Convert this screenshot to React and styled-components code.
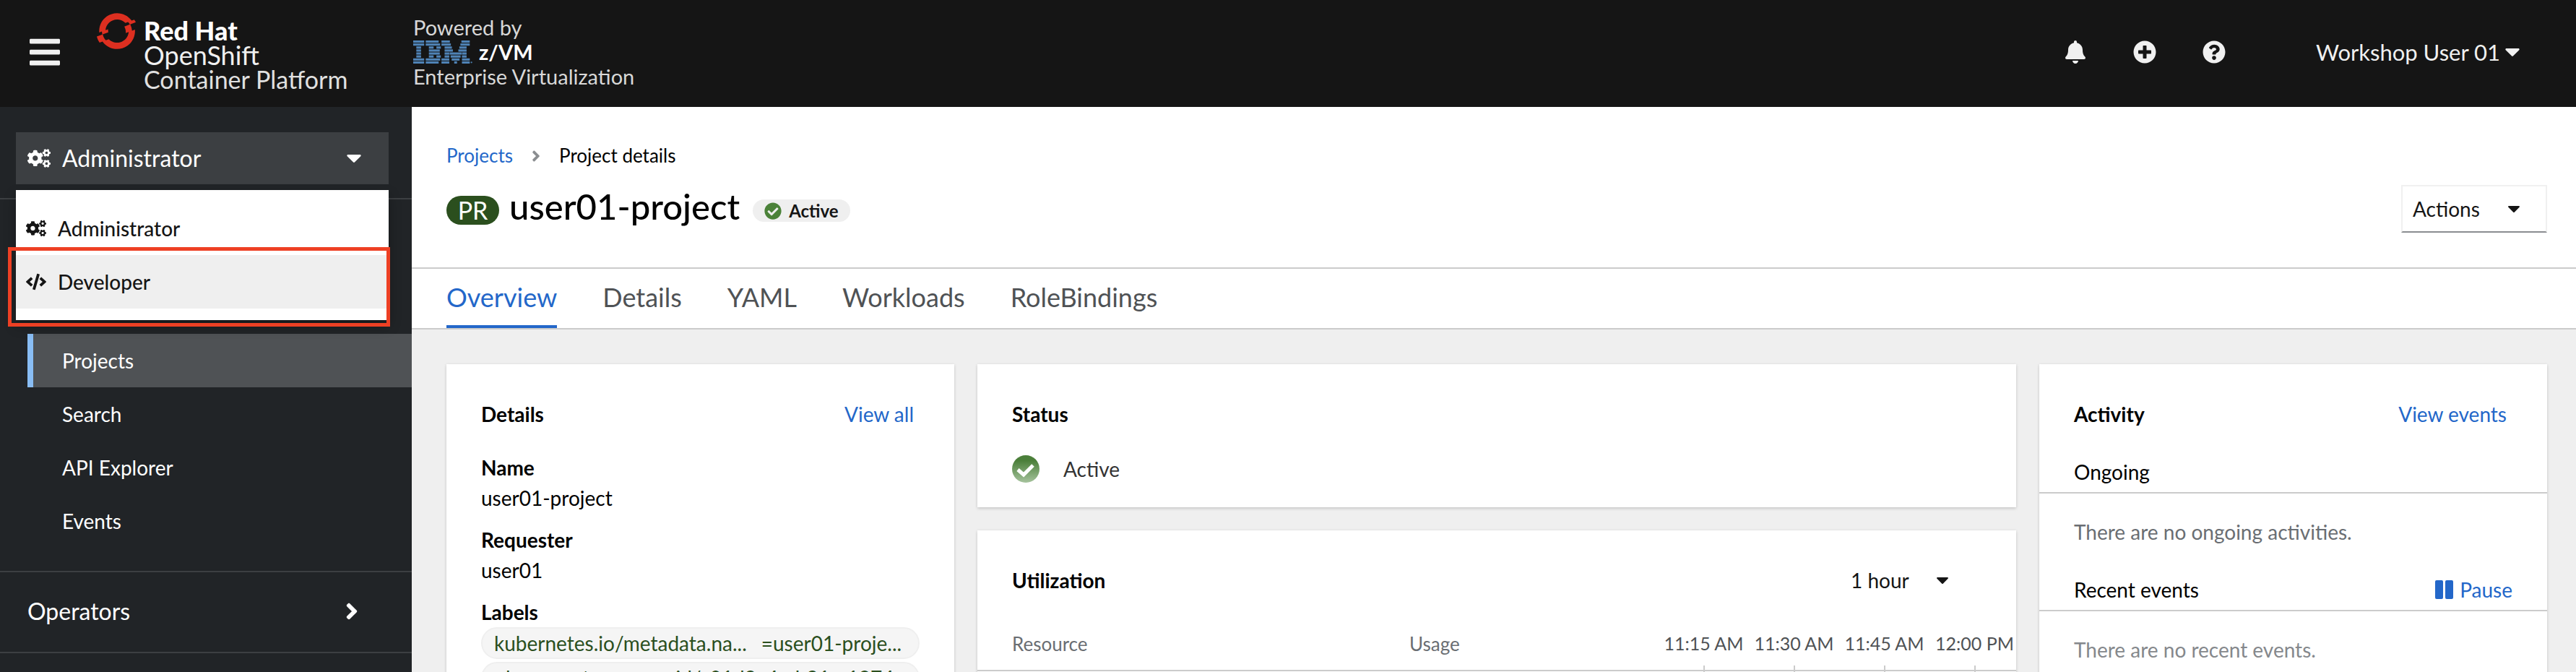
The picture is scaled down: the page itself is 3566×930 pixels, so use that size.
import React from 'react';
import styled, { createGlobalStyle, css } from 'styled-components';
import { FaBars, FaBell, FaPlusCircle, FaQuestionCircle, FaCogs, FaCode, FaAngleRight, FaCheckCircle } from 'react-icons/fa';
import { SiRedhatopenshift } from 'react-icons/si';

const color = {
  masthead: '#151515',
  sidebar: '#212427',
  sidebarLine: '#3c3f42',
  current: '#4f5255',
  accent: '#89bdf4',
  link: '#2367c9',
  line: '#cbcbcb',
  canvas: '#efefef',
  green: '#4b8239',
  darkGreen: '#2b4f1e',
  muted: '#6a6e73',
};

const GlobalStyle = createGlobalStyle`
  *, *::before, *::after { box-sizing: border-box; }
  body {
    margin: 0;
    font-family: Lato, "Liberation Sans", sans-serif;
    font-size: 28px;
    line-height: 42px;
    color: #000;
  }
  h1, h2, h3, p, ul, ol, dl, dd { margin: 0; padding: 0; }
  ul, ol { list-style: none; }
  button, select { font: inherit; color: inherit; border: 0; background: none; padding: 0; margin: 0; text-align: left; }
  svg { display: block; flex: none; }
`;

const Shell = styled.div`
  height: 100vh;
  display: grid;
  grid-template: auto minmax(0, 1fr) / 570px minmax(0, 1fr);
  overflow: hidden;
`;

/* Masthead */

const Masthead = styled.header`
  grid-column: 1 / -1;
  height: 148px;
  display: flex;
  align-items: center;
  padding: 0 78px 4px 38px;
  background: ${color.masthead};
  color: #f0f0f0;
`;

const Brand = styled.a`
  align-self: flex-start;
  display: flex;
  gap: 11px;
  margin-left: 48px;
  padding-top: 16px;
  color: #e0e0e0;
  text-decoration: none;
`;

const ProductName = styled.span`
  display: flex;
  flex-direction: column;
  width: 362px;
  padding-top: 9px;
  font-size: 34px;
  line-height: 34px;
`;

const ProductVendor = styled.strong`
  font-size: 36px;
  font-weight: 900;
  color: #fff;
`;

const ProductLine = styled.span`
  font-size: 36px;
  color: #f0f0f0;
`;

const PoweredBy = styled.span`
  display: flex;
  flex-direction: column;
  padding-top: 5px;
  font-size: 29px;
  line-height: 34px;
  color: #d8d8d8;
`;

const Hypervisor = styled.span`
  display: flex;
  align-items: center;
  gap: 8px;
  font-weight: 700;
  color: #fff;
`;

const Tools = styled.div`
  margin-left: auto;
  display: flex;
  align-items: center;
  gap: 64px;
`;

const UserMenu = styled.button`
  display: flex;
  align-items: center;
  gap: 7px;
  margin-left: 61px;
  font-size: 31px;
`;

/* Sidebar */

const Sidebar = styled.nav`
  background: ${color.sidebar};
  color: #fff;
`;

const Perspective = styled.div`
  position: relative;
  padding: 35px 32px 19px 22px;
  border-bottom: 2px solid ${color.sidebarLine};
`;

const PerspectiveToggle = styled.button`
  display: flex;
  align-items: center;
  width: 100%;
  height: 72px;
  padding: 0 38px 0 16px;
  gap: 16px;
  background: ${color.sidebarLine};
  font-size: 32px;

  svg:last-child { margin-left: auto; }
`;

const PerspectiveMenu = styled.ul`
  position: absolute;
  top: 115px;
  left: 22px;
  right: 32px;
  padding: 16px 0;
  background: #fff;
  color: ${color.masthead};
  box-shadow: 0 8px 16px rgba(3, 3, 3, 0.3);
`;

const PerspectiveOption = styled.button`
  display: flex;
  align-items: center;
  gap: 16px;
  width: 100%;
  padding: 16px 14px;
  font-weight: 500;
  background: ${(p) => (p.$hover ? '#efefef' : 'transparent')};
`;

const Callout = styled.div`
  position: absolute;
  top: 194px;
  left: 11px;
  right: 30px;
  height: 110px;
  border: 5px solid #ee4024;
  pointer-events: none;
`;

const NavSection = styled.ul`
  padding: 186px 0 32px 38px;
  border-bottom: 2px solid ${color.sidebarLine};
`;

const NavLink = styled.a`
  display: block;
  padding: 16px 0 16px 40px;
  border-left: 8px solid transparent;
  color: #fff;
  text-decoration: none;
  ${(p) => p.$current && css`
    background: ${color.current};
    border-left-color: ${color.accent};
  `}
`;

const NavGroup = styled.button`
  display: flex;
  align-items: center;
  justify-content: space-between;
  width: 100%;
  padding: 30px 65px 32px 38px;
  border-bottom: 2px solid ${color.sidebarLine};
  font-size: 32px;
  line-height: 48px;
`;

/* Page heading */

const Page = styled.main`
  display: flex;
  flex-direction: column;
  min-width: 0;
  background: ${color.canvas};
`;

const PageHeading = styled.div`
  padding: 48px 40px 48px 48px;
  background: #fff;
  border-bottom: 2px solid ${color.line};
`;

const Breadcrumb = styled.ol`
  display: flex;
  align-items: center;
  gap: 20px;
  margin-bottom: 21px;
  font-size: 26px;
  line-height: 39px;

  svg { color: #8a8d90; }
`;

const Crumb = styled.li`
  display: flex;
  align-items: center;
  gap: 20px;
`;

const Link = styled.a`
  color: ${color.link};
  text-decoration: none;
`;

const TitleRow = styled.div`
  display: flex;
  justify-content: space-between;
`;

const TitleGroup = styled.div`
  display: flex;
  align-items: baseline;
  align-self: flex-start;
  gap: 14px;
`;

const KindBadge = styled.span`
  width: 73px;
  border-radius: 20px;
  background: ${color.darkGreen};
  color: #fff;
  font-size: 34px;
  line-height: 40px;
  text-align: center;
`;

const Title = styled.h1`
  font-size: 49px;
  line-height: 58px;
  font-weight: 500;
`;

const StatusPill = styled.span`
  align-self: flex-end;
  display: flex;
  align-items: center;
  gap: 10px;
  margin: 0 0 7px 4px;
  padding: 0 16px;
  border-radius: 16px;
  background: ${color.canvas};
  color: ${color.masthead};
  font-size: 24px;
  line-height: 31px;
  font-weight: 700;

  svg { color: ${color.green}; }
`;

const ActionsButton = styled.button`
  display: flex;
  align-items: center;
  justify-content: space-between;
  width: 202px;
  height: 66px;
  padding: 0 36px 0 14px;
  border: 2px solid #f0f0f0;
  border-bottom-color: #8a8d90;
  color: ${color.masthead};
`;

const Tabs = styled.div`
  display: flex;
  gap: 63px;
  padding: 0 48px;
  background: #fff;
  border-bottom: 2px solid ${color.line};
`;

const Tab = styled.button`
  padding: 12px 0;
  border-bottom: 4px solid ${(p) => (p.$selected ? color.link : 'transparent')};
  color: ${(p) => (p.$selected ? color.link : '#4f5255')};
  font-size: 36px;
  line-height: 54px;
`;

/* Dashboard */

const Dashboard = styled.div`
  flex: 1;
  min-height: 0;
  display: grid;
  grid-template-columns: repeat(12, minmax(0, 1fr));
  align-items: start;
  gap: 32px;
  padding: 48px 40px 0 48px;
`;

const Column = styled.div`
  grid-column: span ${(p) => p.$span};
  display: flex;
  flex-direction: column;
  gap: 32px;
`;

const Card = styled.section`
  background: #fff;
  box-shadow: 0 2px 4px rgba(3, 3, 3, 0.14), 0 0 4px rgba(3, 3, 3, 0.06);
`;

const CardHeader = styled.div`
  display: flex;
  justify-content: space-between;
  padding: 48px 56px 0 48px;
`;

const CardTitle = styled.h2`
  font-size: 28px;
  font-weight: 700;
`;

const DetailList = styled.dl`
  padding: 32px 48px 48px;

  dt { font-weight: 700; }
  dd { margin-bottom: 16px; }
`;

const LabelList = styled.ul`
  display: flex;
  flex-direction: column;
  gap: 4px;
`;

const Label = styled.a`
  display: flex;
  gap: 20px;
  height: 44px;
  padding: 0 16px;
  border: 2px solid #efefef;
  border-radius: 22px;
  background: #f5f5f5;
  color: ${color.darkGreen};
  line-height: 40px;
  text-decoration: none;
  white-space: nowrap;
`;

const Health = styled.div`
  display: flex;
  align-items: center;
  gap: 33px;
  padding: 34px 48px 32px;
  color: #333;
`;

const Duration = styled.label`
  display: flex;
  align-items: center;
  gap: 38px;
  margin-right: 38px;
  color: ${color.masthead};

  select { appearance: none; }
`;

const UsageHeader = styled.div`
  display: grid;
  grid-template-columns: minmax(0, 550fr) minmax(0, 345fr) minmax(0, 495fr);
  margin-top: 41px;
  padding-left: 48px;
  border-bottom: 2px solid ${color.line};
  color: ${color.muted};
  font-size: 26px;
  line-height: 52px;
`;

const TimeAxis = styled.div`
  display: grid;
  grid-template-columns: repeat(4, 125px);
  overflow-x: clip;
  color: #4f5255;
  font-size: 25px;
  text-align: center;
`;

const Tick = styled.span`
  display: flex;
  flex-direction: column;
  align-items: center;
  gap: 6px;
  line-height: 50px;

  &::after {
    content: '';
    width: 2px;
    height: 16px;
    margin-bottom: -10px;
    background: ${color.line};
  }
`;

const UsageBody = styled.div`
  height: 200px;
`;

const ActivityHeading = styled.div`
  display: flex;
  justify-content: space-between;
  padding: 0 48px 7px;
  border-bottom: 2px solid ${color.line};
`;

const ActivityTitle = styled.h3`
  font-size: 28px;
  font-weight: 400;
`;

const ActivityBody = styled.p`
  padding: 32px 48px 38px;
  color: ${(p) => (p.$faded ? '#85888c' : color.muted)};
`;

const ActivityFeed = styled.div`
  padding-top: 38px;
`;

const PauseButton = styled.button`
  display: flex;
  align-items: center;
  gap: 9px;
  color: ${color.link};
`;

/* Drawings */

const Caret = ({ width = 16 }) => (
  <svg width={width} height={Math.round(width * 0.57)} viewBox="11 192 298 169" fill="currentColor" aria-hidden="true">
    <path d="M31.3 192h257.3c17.8 0 26.7 21.5 14.1 34.1L174.1 354.8c-7.8 7.8-20.5 7.8-28.3 0L17.2 226.1C4.6 213.5 13.5 192 31.3 192z" />
  </svg>
);

const PauseIcon = () => (
  <svg width="25" height="26" viewBox="0 0 25 26" fill="currentColor" aria-hidden="true">
    <rect width="11" height="26" rx="2" />
    <rect x="14" width="11" height="26" rx="2" />
  </svg>
);

const HealthyIcon = () => (
  <svg width="38" height="38" viewBox="0 0 38 38" aria-hidden="true">
    <defs>
      <linearGradient id="healthy" x1="0" y1="0" x2="0" y2="1">
        <stop offset="0.2" stopColor="#4b7f3a" />
        <stop offset="1" stopColor="#a6c39d" />
      </linearGradient>
    </defs>
    <circle cx="19" cy="19" r="19" fill="url(#healthy)" />
    <path d="M8 20l8 7L29 14" fill="none" stroke="#fff" strokeWidth="5" />
  </svg>
);

/* Stripe segments of the IBM mark: one list of [start, end] pairs per stripe. */
const ibmStripes = [
  [[0, 194], [222, 450], [500, 648], [852, 1000]],
  [[0, 194], [222, 476], [500, 666], [834, 1000]],
  [[55, 139], [277, 361], [410, 488], [555, 684], [816, 944]],
  [[55, 139], [277, 470], [555, 702], [798, 944]],
  [[55, 139], [277, 470], [555, 638], [644, 856], [862, 944]],
  [[55, 139], [277, 361], [410, 488], [555, 638], [662, 838], [862, 944]],
  [[0, 194], [222, 476], [500, 638], [680, 820], [862, 1000]],
  [[0, 194], [222, 450], [500, 638], [725, 775], [862, 1000]],
];

const IbmMark = () => (
  <svg width="83" height="32" viewBox="0 0 1060 411" preserveAspectRatio="none" fill="#4f83b6" role="img" aria-label="IBM">
    {ibmStripes.map((stripe, row) =>
      stripe.map(([start, end]) => (
        <rect key={`${row}-${start}`} x={start} y={row * 53} width={end - start} height="40" />
      ))
    )}
    <circle cx="1030" cy="390" r="14" />
  </svg>
);

const navItems = ['Projects', 'Search', 'API Explorer', 'Events'];
const tabs = ['Overview', 'Details', 'YAML', 'Workloads', 'RoleBindings'];
const times = ['11:15 AM', '11:30 AM', '11:45 AM', '12:00 PM'];

export default function App() {
  return (
    <>
      <GlobalStyle />
      <Shell>
        <Masthead>
          <button aria-label="Toggle navigation"><FaBars size={48} /></button>
          <Brand href="#">
            <SiRedhatopenshift size={54} color="#dd2f20" />
            <ProductName>
              <ProductVendor>Red Hat</ProductVendor>
              <ProductLine>OpenShift</ProductLine>
              <span>Container Platform</span>
            </ProductName>
            <PoweredBy>
              <span>Powered by</span>
              <Hypervisor><IbmMark />z/VM</Hypervisor>
              <span>Enterprise Virtualization</span>
            </PoweredBy>
          </Brand>
          <Tools>
            <button aria-label="Notifications"><FaBell size={32} /></button>
            <button aria-label="Add"><FaPlusCircle size={32} /></button>
            <button aria-label="Help"><FaQuestionCircle size={32} /></button>
            <UserMenu aria-haspopup="menu">Workshop User 01<Caret width={20} /></UserMenu>
          </Tools>
        </Masthead>

        <Sidebar>
          <Perspective>
            <PerspectiveToggle aria-haspopup="menu" aria-expanded="true">
              <FaCogs size={32} />
              Administrator
              <Caret width={20} />
            </PerspectiveToggle>
            <PerspectiveMenu>
              <li><PerspectiveOption><FaCogs size={28} />Administrator</PerspectiveOption></li>
              <li><PerspectiveOption $hover><FaCode size={28} />Developer</PerspectiveOption></li>
            </PerspectiveMenu>
            <Callout />
          </Perspective>
          <NavSection>
            {navItems.map((item) => (
              <li key={item}><NavLink href="#" $current={item === 'Projects'}>{item}</NavLink></li>
            ))}
          </NavSection>
          <NavGroup aria-expanded="false">Operators<FaAngleRight size={36} /></NavGroup>
        </Sidebar>

        <Page>
          <PageHeading>
            <Breadcrumb>
              <Crumb><Link href="#">Projects</Link><FaAngleRight size={24} /></Crumb>
              <Crumb>Project details</Crumb>
            </Breadcrumb>
            <TitleRow>
              <TitleGroup>
                <KindBadge>PR</KindBadge>
                <Title>user01-project</Title>
                <StatusPill><FaCheckCircle size={24} />Active</StatusPill>
              </TitleGroup>
              <ActionsButton aria-haspopup="menu">Actions<Caret /></ActionsButton>
            </TitleRow>
          </PageHeading>
          <Tabs role="tablist">
            {tabs.map((tab) => (
              <Tab key={tab} role="tab" aria-selected={tab === 'Overview'} $selected={tab === 'Overview'}>{tab}</Tab>
            ))}
          </Tabs>

          <Dashboard>
            <Column $span={3}>
              <Card>
                <CardHeader>
                  <CardTitle>Details</CardTitle>
                  <Link href="#">View all</Link>
                </CardHeader>
                <DetailList>
                  <dt>Name</dt>
                  <dd>user01-project</dd>
                  <dt>Requester</dt>
                  <dd>user01</dd>
                  <dt>Labels</dt>
                  <dd>
                    <LabelList>
                      <li><Label href="#"><span>kubernetes.io/metadata.na...</span><span>=user01-proje...</span></Label></li>
                      <li><Label href="#">olm.operatorgroup.uid/c01d9a4c-b91c-1874...</Label></li>
                    </LabelList>
                  </dd>
                </DetailList>
              </Card>
            </Column>

            <Column $span={6}>
              <Card>
                <CardHeader><CardTitle>Status</CardTitle></CardHeader>
                <Health><HealthyIcon />Active</Health>
              </Card>
              <Card>
                <CardHeader>
                  <CardTitle>Utilization</CardTitle>
                  <Duration>
                    <select aria-label="Duration"><option>1 hour</option></select>
                    <Caret />
                  </Duration>
                </CardHeader>
                <UsageHeader>
                  <span>Resource</span>
                  <span>Usage</span>
                  <TimeAxis>{times.map((time) => <Tick key={time}>{time}</Tick>)}</TimeAxis>
                </UsageHeader>
                <UsageBody />
              </Card>
            </Column>

            <Column $span={3}>
              <Card>
                <CardHeader>
                  <CardTitle>Activity</CardTitle>
                  <Link href="#">View events</Link>
                </CardHeader>
                <ActivityFeed>
                  <ActivityHeading><ActivityTitle>Ongoing</ActivityTitle></ActivityHeading>
                  <ActivityBody>There are no ongoing activities.</ActivityBody>
                  <ActivityHeading>
                    <ActivityTitle>Recent events</ActivityTitle>
                    <PauseButton><PauseIcon />Pause</PauseButton>
                  </ActivityHeading>
                  <ActivityBody $faded>There are no recent events.</ActivityBody>
                </ActivityFeed>
              </Card>
            </Column>
          </Dashboard>
        </Page>
      </Shell>
    </>
  );
}
